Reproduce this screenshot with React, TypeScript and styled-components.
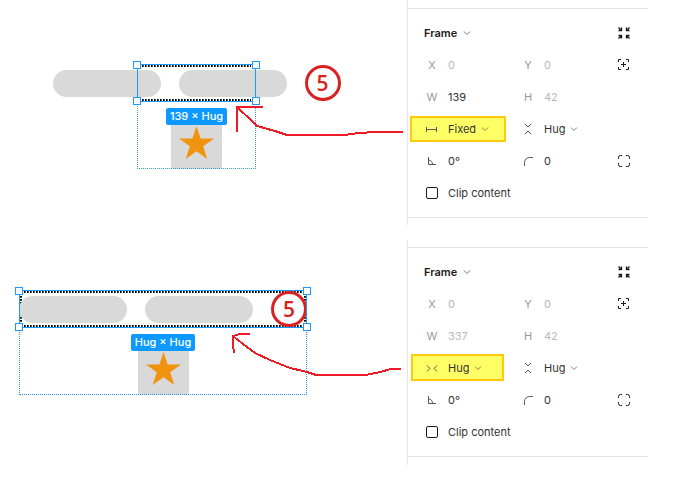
import React from "react";
import styled, { createGlobalStyle, css } from "styled-components";

const GlobalStyle = createGlobalStyle`
  *, *::before, *::after { box-sizing: border-box; }
  body { margin: 0; background: #fff; font-family: Inter, "Liberation Sans", sans-serif; font-size: 11px; line-height: 16px; color: #333; }
  button, input, select { font: inherit; color: inherit; margin: 0; padding: 0; border: 0; background: none; }
`;

const Page = styled.main`
  display: flex;
  flex-direction: column;
  gap: 15px;
  padding-right: 31px;
`;

const Example = styled.section`
  display: grid;
  grid-template-columns: minmax(0, 1fr) 241px;
`;

/* Canvas */

const Canvas = styled.div`
  position: relative;
`;

const Frame = styled.div<{ $x: number; $y: number; $width: number }>`
  position: absolute;
  left: ${(p) => p.$x}px;
  top: ${(p) => p.$y}px;
  width: ${(p) => p.$width}px;
  display: flex;
  flex-direction: column;
  align-items: center;
  gap: 16px;

  &::after {
    content: "";
    position: absolute;
    inset: 38px 0 0;
    border: 1px dotted #2f93dd;
    border-top: 0;
  }
`;

const dots = (angle: number) =>
  `repeating-linear-gradient(${angle}deg, #000 0 1px, #555 1px 2px, #fff 2px 3px)`;

const Selection = styled.div<{ $allSides: boolean }>`
  position: relative;
  align-self: stretch;
  height: 38px;
  display: flex;
  align-items: center;
  justify-content: center;
  gap: 18px;
  background-image: ${dots(90)}, ${dots(90)}${(p) => p.$allSides && `, ${dots(180)}, ${dots(180)}`};
  background-repeat: no-repeat;
  background-position: 5px 1px, 5px calc(100% - 1px), 1px 0, calc(100% - 1px) 0;
  background-size: calc(100% - 10px) 2px, calc(100% - 10px) 2px, 2px 100%, 2px 100%;

  &::after {
    content: "";
    position: absolute;
    inset: 0;
    border: 1px solid #1b9af7;
  }
`;

const Pill = styled.span`
  flex: none;
  width: 108px;
  height: 27px;
  border-radius: 14px;
  background: #d9d9d9;
`;

const Count = styled.span`
  flex: none;
  width: 36px;
  height: 36px;
  display: grid;
  place-items: center;
  border: 3px solid #d92121;
  border-radius: 50%;
  color: #d92121;
  font: 600 21px/30px "Open Sans", sans-serif;
`;

const Handle = styled.i<{ $corner: "tl" | "tr" | "bl" | "br" }>`
  position: absolute;
  z-index: 1;
  width: 8px;
  height: 8px;
  border: 1px solid #1b9af7;
  background: #fff;
  ${(p) => (p.$corner[0] === "t" ? css`top: -3px;` : css`bottom: -3px;`)}
  ${(p) => (p.$corner[1] === "l" ? css`left: -4px;` : css`right: -4px;`)}
`;

const Tile = styled.div`
  width: 51px;
  height: 51px;
  display: flex;
  justify-content: center;
  padding-top: 8px;
  border-radius: 3px;
  background: #d9d9d9;
`;

const SizeBadge = styled.span`
  position: absolute;
  z-index: 1;
  top: 44px;
  align-self: center;
  padding: 0 4px;
  border-radius: 2px;
  background: #0d99ff;
  color: #fff;
  font-weight: 500;
  line-height: 17px;
  white-space: nowrap;
`;

const Arrow = styled.svg`
  position: absolute;
  left: 0;
  top: 0;
  width: 407px;
  height: 225px;
  z-index: 2;
  pointer-events: none;
  fill: none;
  stroke: #ed1c24;
  stroke-width: 2;
  shape-rendering: crispEdges;
`;

/* Properties panel */

const Panel = styled.aside<{ $top: number; $bottom: number }>`
  padding-top: ${(p) => p.$top}px;
  padding-bottom: ${(p) => p.$bottom}px;
  border-left: 1px solid #e5e5e5;
`;

const Group = styled.form`
  padding: 8px;
  border: solid #e5e5e5;
  border-width: 1px 0;
`;

const Row = styled.div`
  display: grid;
  grid-template-columns: 96px 96px 32px;
  height: 32px;
  align-items: center;
`;

const TitleField = styled.label`
  grid-column: span 2;
  display: flex;
  align-items: center;
  gap: 6px;
  padding-left: 8px;
  color: #1a1a1a;
  font-weight: 600;
`;

const Field = styled.label<{ $mark?: "wide" | "narrow" }>`
  position: relative;
  display: grid;
  grid-template-columns: 32px minmax(0, 1fr);
  align-items: center;
  height: 32px;

  ${(p) =>
    p.$mark &&
    css`
      isolation: isolate;
      &::before {
        content: "";
        position: absolute;
        z-index: -1;
        inset: ${p.$mark === "wide" ? "3px 6px 3px -6px" : "2px 8px 3px -5px"};
        border: 2px solid #ffc90e;
        background: #ffff66;
      }
    `}
`;

const FieldName = styled.span`
  display: grid;
  place-items: center;
  color: #999;
`;

const FieldIcon = styled(FieldName)`
  color: #555;
`;

const NumberInput = styled.input<{ $muted?: boolean }>`
  width: 56px;
  height: 16px;
  outline: 0;
  && { color: ${(p) => (p.$muted ? "#b8b8b8" : "#333")}; }
`;

const Choice = styled.span`
  display: flex;
  align-items: center;
  gap: 5px;
  color: #333;
`;

const Select = styled.select`
  appearance: none;
  field-sizing: content;
  height: 16px;
  outline: 0;
`;

const IconButton = styled.button`
  display: grid;
  place-items: center;
  width: 32px;
  height: 32px;
  && { color: #1a1a1a; }
`;

const CheckField = styled.label`
  grid-column: 1 / -1;
  display: grid;
  grid-template-columns: 32px 1fr;
  align-items: center;
`;

const Checkbox = styled.input`
  appearance: none;
  justify-self: center;
  width: 12px;
  height: 12px;
  && { border: 1px solid #1a1a1a; border-radius: 2px; }
  &&:checked { background: #1a1a1a; }
`;

const Glyph = styled.svg`
  display: block;
  flex: none;
  fill: none;
  stroke: currentColor;
  stroke-width: 1;
`;

const icons = {
  collapse:
    "M.5 .5l3 3M3.5 .5v3H.5M11.5 .5l-3 3M8.5 .5v3h3M.5 11.5l3-3M3.5 11.5v-3H.5M11.5 11.5l-3-3M8.5 11.5v-3h3",
  target: "M.5 3V.5H3M8 .5h2.5V3M10.5 8v2.5H8M3 10.5H.5V8M5.5 3v5M3 5.5h5",
  corners:
    "M.5 4V2.5a2 2 0 0 1 2-2H4M8 .5h1.5a2 2 0 0 1 2 2V4M11.5 8v1.5a2 2 0 0 1-2 2H8M4 11.5H2.5a2 2 0 0 1-2-2V8",
  fixed: "M.5 4v5M10.5 4v5M.5 6.5h10",
  hugX: "M1 3.5l3 3-3 3M11 3.5l-3 3 3 3",
  hugY: "M3 1l3 3 3-3M3 11l3-3 3 3",
  angle: "M2.5 2v7.5H10M2.5 5a4.5 4.5 0 0 1 4 4.5",
  radius: "M2.5 11V7.5a5 5 0 0 1 5-5H11",
};

const Icon = ({ name }: { name: keyof typeof icons }) => (
  <Glyph width="12" height="12" viewBox="0 0 12 12" aria-hidden="true">
    <path d={icons[name]} strokeWidth={name === "collapse" ? 1.3 : 1} />
  </Glyph>
);

const Chevron = () => (
  <Glyph width="8" height="6" viewBox="0 0 8 6" aria-hidden="true" opacity="0.6">
    <path d="M1 1.5l3 3 3-3" />
  </Glyph>
);

const Dropdown = ({ label, value, options }: { label: string; value: string; options: string[] }) => (
  <Choice>
    <Select aria-label={label} defaultValue={value}>
      {options.map((o) => (
        <option key={o}>{o}</option>
      ))}
    </Select>
    <Chevron />
  </Choice>
);

const Star = () => (
  <svg width="35" height="33" viewBox="0 0 35 33" aria-hidden="true">
    <path
      fill="#f0930f"
      d="M17.5 0l4.1 12.5H35l-10.8 7.8L28.3 33 17.5 25.2 6.7 33l4.1-12.7L0 12.5h13.4z"
    />
  </svg>
);

type Sizing = "Fixed" | "Hug";

interface ExampleData {
  frame: { x: number; y: number; width: number };
  size: string;
  width: string;
  sizing: Sizing;
  panelTop: number;
  panelBottom: number;
  arrow: string;
}

const examples: ExampleData[] = [
  {
    frame: { x: 137, y: 64, width: 119 },
    size: "139 × Hug",
    width: "139",
    sizing: "Fixed",
    panelTop: 8,
    panelBottom: 7,
    arrow:
      "M403 132H375L359 133L344 135H287L275 131L257 126L252 121L238 108M263 107H237V132",
  },
  {
    frame: { x: 19, y: 50, width: 288 },
    size: "Hug × Hug",
    width: "337",
    sizing: "Hug",
    panelTop: 7,
    panelBottom: 8,
    arrow:
      "M401 129H391L380 132L366 135H316L307 132L290 128L270 120L255 113L243 104L233 96M250 94H240L233 96V104L234 113",
  },
];

const Drawing = ({ frame, size, sizing, arrow }: ExampleData) => (
  <Canvas>
    <Frame $x={frame.x} $y={frame.y} $width={frame.width}>
      <Selection $allSides={sizing === "Hug"}>
        <Pill />
        <Pill />
        <Count>5</Count>
        <Handle $corner="tl" />
        <Handle $corner="tr" />
        <Handle $corner="bl" />
        <Handle $corner="br" />
      </Selection>
      <Tile>
        <Star />
      </Tile>
      <SizeBadge>{size}</SizeBadge>
    </Frame>
    <Arrow aria-hidden="true">
      <path d={arrow} />
    </Arrow>
  </Canvas>
);

const Properties = ({ width, sizing, panelTop, panelBottom }: ExampleData) => (
  <Panel $top={panelTop} $bottom={panelBottom}>
    <Group>
      <Row>
        <TitleField>
          <Select aria-label="Layer type" defaultValue="Frame">
            <option>Frame</option>
            <option>Group</option>
          </Select>
          <Chevron />
        </TitleField>
        <IconButton type="button" aria-label="Resize to fit">
          <Icon name="collapse" />
        </IconButton>
      </Row>
      <Row>
        <Field>
          <FieldName>X</FieldName>
          <NumberInput $muted defaultValue="0" />
        </Field>
        <Field>
          <FieldName>Y</FieldName>
          <NumberInput $muted defaultValue="0" />
        </Field>
        <IconButton type="button" aria-label="Absolute position">
          <Icon name="target" />
        </IconButton>
      </Row>
      <Row>
        <Field>
          <FieldName>W</FieldName>
          <NumberInput $muted={sizing === "Hug"} defaultValue={width} />
        </Field>
        <Field>
          <FieldName>H</FieldName>
          <NumberInput $muted defaultValue="42" />
        </Field>
      </Row>
      <Row>
        <Field $mark={sizing === "Fixed" ? "wide" : "narrow"}>
          <FieldIcon>
            <Icon name={sizing === "Fixed" ? "fixed" : "hugX"} />
          </FieldIcon>
          <Dropdown label="Horizontal resizing" value={sizing} options={["Fixed", "Hug"]} />
        </Field>
        <Field>
          <FieldIcon>
            <Icon name="hugY" />
          </FieldIcon>
          <Dropdown label="Vertical resizing" value="Hug" options={["Fixed", "Hug"]} />
        </Field>
      </Row>
      <Row>
        <Field>
          <FieldIcon>
            <Icon name="angle" />
          </FieldIcon>
          <NumberInput aria-label="Rotation" defaultValue="0°" />
        </Field>
        <Field>
          <FieldIcon>
            <Icon name="radius" />
          </FieldIcon>
          <NumberInput aria-label="Corner radius" defaultValue="0" />
        </Field>
        <IconButton type="button" aria-label="Independent corners">
          <Icon name="corners" />
        </IconButton>
      </Row>
      <Row>
        <CheckField>
          <Checkbox type="checkbox" />
          Clip content
        </CheckField>
      </Row>
    </Group>
  </Panel>
);

export default function App() {
  return (
    <Page>
      <GlobalStyle />
      {examples.map((example) => (
        <Example key={example.size}>
          <Drawing {...example} />
          <Properties {...example} />
        </Example>
      ))}
    </Page>
  );
}
